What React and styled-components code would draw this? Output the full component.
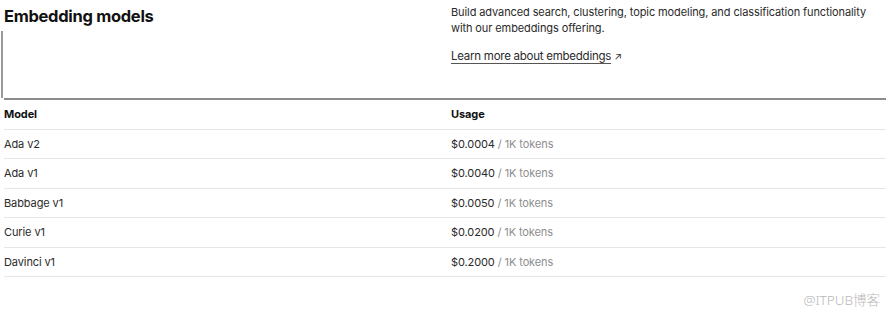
import React from 'react';
import styled, { createGlobalStyle } from 'styled-components';

const GlobalStyle = createGlobalStyle`
  body {
    margin: 0;
    background: #fff;
    font-family: Inter, "Noto Sans", sans-serif;
    color: #202123;
  }
`

const Page = styled.main`
  position: relative;
  width: 890px;
  height: 318px;
  padding: 0 4px;
  box-sizing: border-box;
`
const Intro = styled.section`
  display: grid;
  grid-template-columns: 447px 1fr;
  border-bottom: 2px solid #8c8c8c;
  height: 100px;
  box-sizing: border-box;
`
const LeftCol = styled.div`
  display: flex;
  flex-direction: column;
`
const Title = styled.h2`
  margin: 5px 0 0;
  font-size: 16.5px;
  line-height: 22px;
  font-weight: 700;
  letter-spacing: -0.3px;
  color: #111;
`
const Frame = styled.div`
  flex: 1;
  margin: 4px 0 0 -3px;
  border-left: 2px solid #9a9a9a;
`
const Description = styled.p`
  margin: 4px 0 0;
  max-width: 422px;
  font-size: 11px;
  line-height: 16px;
  letter-spacing: -0.1px;
  color: #2a2a2a;
`
const LearnMore = styled.a`
  display: inline-block;
  margin-top: 12px;
  font-size: 11.5px;
  line-height: 16px;
  letter-spacing: -0.25px;
  color: #2a2a2a;
  text-decoration: underline;
  text-decoration-color: #555;
  text-underline-offset: 3px;
`
const Arrow = styled.span`
  margin-left: 3px;
  font-size: 10px;
  display: inline-block;
  color: #333;
`
const Table = styled.div`
  display: flex;
  flex-direction: column;
`
const Row = styled.div`
  display: grid;
  grid-template-columns: 447px 1fr;
  align-items: center;
  height: 29.5px;
  box-sizing: border-box;
  border-bottom: 1px solid #e6e6e6;
  font-size: 11px;
  letter-spacing: -0.1px;
  font-weight: ${p => (p.$head ? 700 : 400)};
  color: ${p => (p.$head ? '#111' : '#2a2a2a')};
`
const Unit = styled.span`
  color: #8e8e8e;
`
const Watermark = styled.div`
  position: absolute;
  right: 10px;
  bottom: 9px;
  font-family: "Noto Sans", "Noto Sans CJK SC", sans-serif;
  font-size: 13.5px;
  font-weight: 300;
  color: #b8b8b8;
`

const models = [
  ['Ada v2', '$0.0004'],
  ['Ada v1', '$0.0040'],
  ['Babbage v1', '$0.0050'],
  ['Curie v1', '$0.0200'],
  ['Davinci v1', '$0.2000'],
];

function App() {
  return (
    <Page>
      <GlobalStyle />
      <Intro>
        <LeftCol>
          <Title>Embedding models</Title>
          <Frame />
        </LeftCol>
        <div>
          <Description>
            Build advanced search, clustering, topic modeling, and classification functionality
            with our embeddings offering.
          </Description>
          <LearnMore href="#">Learn more about embeddings</LearnMore>
          <Arrow>↗</Arrow>
        </div>
      </Intro>
      <Table>
        <Row $head>
          <span>Model</span>
          <span>Usage</span>
        </Row>
        {models.map(([name, price]) => (
          <Row key={name}>
            <span>{name}</span>
            <span>{price} <Unit>/ 1K tokens</Unit></span>
          </Row>
        ))}
      </Table>
      <Watermark>@ITPUB博客</Watermark>
    </Page>
  );
}

export default App;
